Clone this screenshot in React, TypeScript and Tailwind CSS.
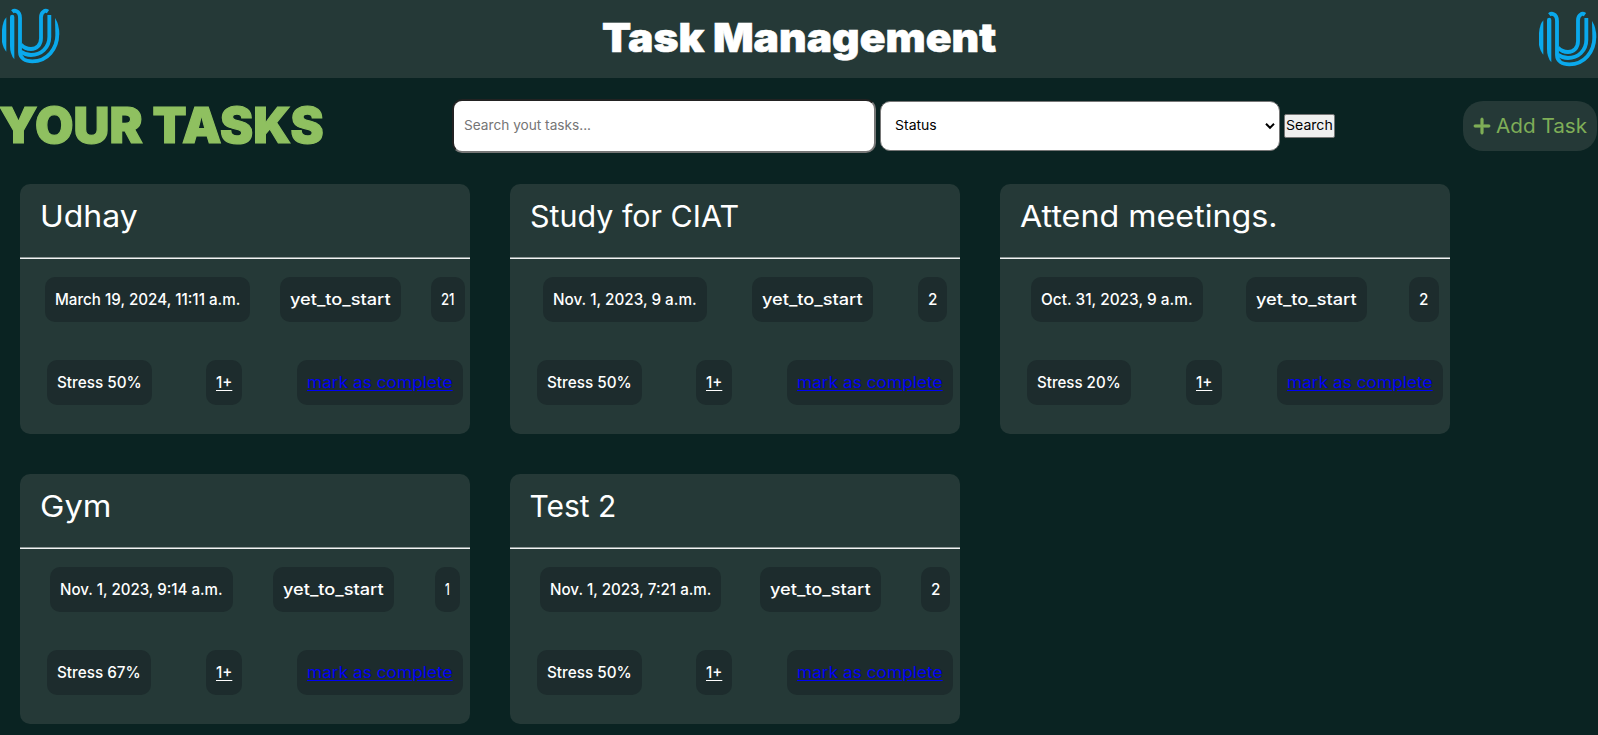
import { useLayoutEffect, useRef } from "react";
import { FaPlus } from "react-icons/fa6";

type Task = {
  title: string;
  titleWidth: number;
  date: string;
  dateWidth: number;
  count: string;
  countWidth: number;
  stress: string;
  stressWidth: number;
};

const tasks: Task[] = [
  { title: "Udhay", titleWidth: 98, date: "March 19, 2024, 11:11 a.m.", dateWidth: 205, count: "21", countWidth: 34, stress: "Stress 50%", stressWidth: 105 },
  { title: "Study for CIAT", titleWidth: 209, date: "Nov. 1, 2023, 9 a.m.", dateWidth: 164, count: "2", countWidth: 29.5, stress: "Stress 50%", stressWidth: 105 },
  { title: "Attend meetings.", titleWidth: 258, date: "Oct. 31, 2023, 9 a.m.", dateWidth: 172, count: "2", countWidth: 29.5, stress: "Stress 20%", stressWidth: 104 },
  { title: "Gym", titleWidth: 72, date: "Nov. 1, 2023, 9:14 a.m.", dateWidth: 183, count: "1", countWidth: 25, stress: "Stress 67%", stressWidth: 104 },
  { title: "Test 2", titleWidth: 87, date: "Nov. 1, 2023, 7:21 a.m.", dateWidth: 181, count: "2", countWidth: 29.5, stress: "Stress 50%", stressWidth: 105 },
];

/** Widens or narrows a line of text so that it spans the given width. */
function Fitted({ text, width, className = "" }: { text: string; width: number; className?: string }) {
  const ref = useRef<HTMLSpanElement>(null);
  useLayoutEffect(() => {
    const el = ref.current;
    if (!el) return;
    el.style.transform = `scaleX(${width / el.offsetWidth})`;
  }, [text, width]);
  return (
    <span className="block" style={{ width }}>
      <span ref={ref} className={`inline-block origin-left whitespace-pre ${className}`}>
        {text}
      </span>
    </span>
  );
}

function Logo() {
  return (
    <svg width="60" height="60" viewBox="0 0 180 180" fill="none" stroke="#0aa9ec" strokeWidth="11.5">
      <g fill="#0aa9ec" stroke="none">
        <path d="M19 34V137Q10 127 6 108V72Q8 46 19 34Z" />
        <path d="M30 33q0-7 6.500-7t6.500 7V160Q30 145 30 120Z" />
        <path d="M165 36Q178 56 178 85H166Z" />
      </g>
      <path d="M37 17Q43 12 50 16Q60 21 60 36V138C60 156 76 166 97 166C142 166 172 128 172 84" />
      <path d="M144 17Q137 12 132 16Q123 21 123 34V97C123 117 110 129 93 129Q75 129 63 116" />
      <path d="M148 27V92C148 126 122 147 93 147Q76 147 62 137" />
    </svg>
  );
}

function Chip({ text, width, look = "" }: { text: string; width: number; look?: string }) {
  return (
    <li
      className="flex h-[45px] shrink-0 items-center justify-center rounded-[10px] bg-[#1d2c2d] pb-px text-[16px] font-medium"
      style={{ width }}
    >
      <Fitted text={text} width={width - 20} className={look} />
    </li>
  );
}

function TaskCard({ task }: { task: Task }) {
  return (
    <article className="h-[250px] w-[450px] rounded-[10px] bg-[#253937] text-white">
      <h2 className="flex h-[73px] items-start pt-[9px] pl-[19.5px] text-[30px] leading-[46px] font-normal">
        <Fitted text={task.title} width={task.titleWidth} />
      </h2>
      <div className="h-0.5 border-t border-[#8f9998] bg-[#f2f4f3]" />
      <ul className="mt-[18px] ml-2.5 flex w-[450px] justify-around">
        <Chip text={task.date} width={task.dateWidth} />
        <Chip text="yet_to_start" width={121} />
        <Chip text={task.count} width={task.countWidth} />
      </ul>
      <ul className="mt-[38px] flex w-[470px] justify-around">
        <Chip text={task.stress} width={task.stressWidth} />
        <Chip text="1+" width={36} look="underline underline-offset-2" />
        <Chip text="mark as complete" width={166} look="font-normal text-[#0000f5] underline underline-offset-2" />
      </ul>
    </article>
  );
}

export default function App() {
  return (
    <main className="h-[735px] overflow-hidden bg-[#0a2322] font-['Inter','Open_Sans',sans-serif]">
      <header className="flex h-[78px] justify-between bg-[#253937]">
        <div className="pt-[6px]">
          <Logo />
        </div>
        <h1 className="pt-[8px] text-[40px] leading-[60px] font-black text-white">
          <Fitted text="Task Management" width={394} className="[-webkit-text-stroke:0.6px_#fff]" />
        </h1>
        <div className="pt-[9px] pr-px">
          <Logo />
        </div>
      </header>

      <section className="flex h-[106px] items-start">
        <h2 className="-ml-px w-[453px] pt-[17px] text-[50px] leading-[60px] font-black text-[#8fc060]">
          <Fitted text="YOUR TASKS" width={325} className="[-webkit-text-stroke:1.2px_#8fc060]" />
        </h2>
        <form className="flex items-start pt-[21px]">
          <div className="flex h-[54px] w-[424px] items-center rounded-[10px] border-2 border-t-[#222] border-r-[#767676] border-b-[#767676] border-l-[#222] bg-white pl-2.5 text-[13.33px] text-[#757575]">
            <Fitted text="Search yout tasks..." width={127} />
          </div>
          <div className="mt-0.5 ml-1 flex h-[50px] w-[400px] items-center justify-between rounded-[10px] border border-[#767676] bg-white pr-1 pl-3.5 text-[13.33px] text-black">
            <Fitted text="Status" width={42} />
            <svg width="10" height="8" viewBox="0 0 10 8" fill="none" stroke="#000" strokeWidth="2">
              <path d="M1 1.8L5 5.8L9 1.8" />
            </svg>
          </div>
          <button
            type="button"
            className="mt-[15px] ml-1 flex h-6 w-[51px] items-center rounded-[2px] border border-[#767676] bg-[#efefef] pl-px text-left text-[13.33px] text-black"
          >
            <Fitted text="Search" width={46.5} />
          </button>
        </form>
        <button
          type="button"
          className="mt-[23px] mr-px ml-auto flex h-[50px] w-[134px] items-center rounded-[20px] bg-[#253937] pl-[9px] text-left text-[20px] text-[#7fae57]"
        >
          <FaPlus className="mr-[4px] size-5 stroke-[#7fae57] stroke-[16px]" />
          <Fitted text="Add Task" width={91} />
        </button>
      </section>

      <section className="grid grid-cols-[repeat(3,450px)] gap-10 pl-5">
        {tasks.map((task) => (
          <TaskCard key={task.title} task={task} />
        ))}
      </section>
    </main>
  );
}
